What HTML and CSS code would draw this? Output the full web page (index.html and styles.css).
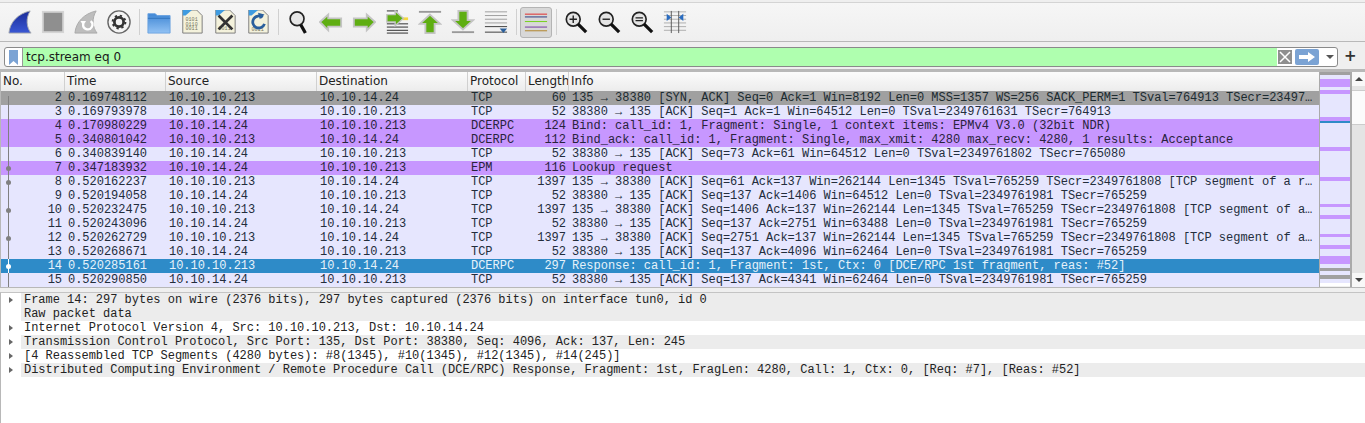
FILE: index.html
```html
<!DOCTYPE html>
<html lang="en">
<head>
    <meta charset="UTF-8">
    <title>Wireshark</title>
    <link rel="stylesheet" href="styles.css">
</head>
<body>
<header class="toolbar">
    <svg class="tool" viewBox="0 0 26 26"><defs><linearGradient id="fin" x1="0" y1="0" x2="0" y2="1"><stop offset="0" stop-color="#1a2c98"/><stop offset="1" stop-color="#3a58d4"/></linearGradient></defs><path d="M1 25C2 13 11 4 24 1C19 9 20 19 25 25Z" fill="url(#fin)" stroke="#a4a8ae"/></svg>
    <svg class="tool" viewBox="0 0 26 26"><rect x="2" y="2" width="22" height="22" fill="#8f8f8f" stroke="#d4d4d4" stroke-width="2"/></svg>
    <svg class="tool" viewBox="0 0 26 26"><path d="M1 25C2 13 11 4 24 1C19 9 20 19 25 25Z" fill="#bdbdbd" stroke="#a8a8a8"/><path d="M10 15A5 5 0 1 0 18 12" fill="none" stroke="#fff" stroke-width="2.5"/><path d="M7 12L13 12L10 17Z" fill="#fff"/></svg>
    <svg class="tool" viewBox="0 0 26 26"><circle cx="13" cy="13" r="12" fill="#f4f4f4" stroke="#666" stroke-width="1.500"/><circle cx="13" cy="13" r="5" fill="none" stroke="#333" stroke-width="3"/><circle cx="13" cy="13" r="7" fill="none" stroke="#333" stroke-width="2" stroke-dasharray="2.500 3"/></svg>
    <span class="sep"></span>
    <svg class="tool" viewBox="0 0 26 26"><defs><linearGradient id="folder" x1="0" y1="0" x2="0" y2="1"><stop offset="0" stop-color="#3f86d4"/><stop offset="1" stop-color="#92c2f4"/></linearGradient></defs><path d="M1 4H9L11 6H25V25H1Z" fill="url(#folder)" stroke="#6aa2e0"/><path d="M1 9H25" stroke="#2f72bc"/></svg>
    <svg class="tool" viewBox="0 0 26 26"><path d="M3 0H18L24 6V25H3Z" fill="#f4f2dc" stroke="#777"/><path d="M3 0H13L6 6H3Z" fill="#3f9be0"/><text class="bits" x="6" y="12">0101</text><text class="bits" x="6" y="17">0110</text><text class="bits" x="6" y="22">0011</text></svg>
    <svg class="tool" viewBox="0 0 26 26"><path d="M3 0H18L24 6V25H3Z" fill="#f4f2dc" stroke="#777"/><path d="M3 0H13L6 6H3Z" fill="#3f9be0"/><text class="bits" x="6" y="22">0011</text><path d="M6 6L21 21M21 6L6 21" stroke="#333" stroke-width="3"/></svg>
    <svg class="tool" viewBox="0 0 26 26"><path d="M3 0H18L24 6V25H3Z" fill="#f4f2dc" stroke="#777"/><path d="M3 0H13L6 6H3Z" fill="#3f9be0"/><text class="bits" x="6" y="23">0011</text><path d="M18 8A6.500 6.500 0 1 0 20 15" fill="none" stroke="#2a5f9c" stroke-width="3"/><path d="M13 3L20 5L15 10Z" fill="#2a5f9c"/></svg>
    <span class="sep"></span>
    <svg class="tool" viewBox="0 0 26 26"><circle cx="12" cy="9.500" r="7.500" fill="#e6e6e6" stroke="#222" stroke-width="1.800"/><path d="M16 16L21 25" stroke="#111" stroke-width="3.500"/></svg>
    <svg class="tool" viewBox="0 0 26 26"><path d="M1 13L10 5V9H24V18H10V22Z" fill="#5fae12" stroke="#c4c4c4" stroke-width="2"/></svg>
    <svg class="tool" viewBox="0 0 26 26"><path d="M25 13L16 5V9H2V18H16V22Z" fill="#5fae12" stroke="#c4c4c4" stroke-width="2"/></svg>
    <svg class="tool" viewBox="0 0 26 26"><path d="M2 1H14M2 15H25M2 18.500H25M2 22H25M2 25H25" stroke="#222"/><rect x="19" y="8" width="6" height="3" fill="#f5d840"/><path d="M20 9L11 1V5H2V13H11V17Z" fill="#5fae12" stroke="#c4c4c4" stroke-width="1.500"/></svg>
    <svg class="tool" viewBox="0 0 26 26"><path d="M1 2H25" stroke="#999" stroke-width="2"/><path d="M13 5L24 15H18V25H8V15H2Z" fill="#5fae12" stroke="#c4c4c4" stroke-width="2"/></svg>
    <svg class="tool" viewBox="0 0 26 26"><path d="M1 24H25" stroke="#999" stroke-width="2"/><path d="M13 21L24 11H18V1H8V11H2Z" fill="#5fae12" stroke="#c4c4c4" stroke-width="2"/></svg>
    <svg class="tool" viewBox="0 0 26 26"><path d="M1 2H25M1 6H25M1 10H25M1 14H25" stroke="#999"/><path d="M1 18H25M1 24H25" stroke="#333"/><path d="M17 20H25L21 25Z" fill="#2a5f9c"/></svg>
    <span class="sep"></span>
    <span class="tool-on">
        <svg class="tool" viewBox="0 0 26 26"><path d="M1 4.500H25" stroke="#e02020"/><path d="M1 7.500H25" stroke="#20307a"/><path d="M1 12.500H25" stroke="#70d010"/><path d="M1 18.500H25" stroke="#7030a0"/><path d="M1 22.500H25" stroke="#b08020"/></svg>
    </span>
    <span class="sep"></span>
    <svg class="tool" viewBox="0 0 26 26"><circle cx="10" cy="10" r="7.500" fill="#e4e4e4" stroke="#222" stroke-width="1.800"/><path d="M6 10H14M10 6V14" stroke="#222" stroke-width="1.500"/><path d="M15 15L24 24" stroke="#111" stroke-width="3.500"/></svg>
    <svg class="tool" viewBox="0 0 26 26"><circle cx="10" cy="10" r="7.500" fill="#e4e4e4" stroke="#222" stroke-width="1.800"/><path d="M6 10H14" stroke="#222" stroke-width="1.500"/><path d="M15 15L24 24" stroke="#111" stroke-width="3.500"/></svg>
    <svg class="tool" viewBox="0 0 26 26"><circle cx="10" cy="10" r="7.500" fill="#e4e4e4" stroke="#222" stroke-width="1.800"/><path d="M6 8.500H14M6 11.500H14" stroke="#222" stroke-width="1.500"/><path d="M15 15L24 24" stroke="#111" stroke-width="3.500"/></svg>
    <svg class="tool" viewBox="0 0 26 26"><path d="M1 2H25M1 6H25M1 10H25M1 14H25M1 18H25M1 22H25" stroke="#aaa"/><path d="M9 1V25M17 1V25" stroke="#555"/><path d="M9 8L4 4V12ZM17 8L22 4V12Z" fill="#2a6cc0"/></svg>
</header>

<form class="filter-bar">
    <div class="filter">
        <span class="bookmark">
            <svg width="9" height="15" viewBox="0 0 9 15"><path d="M0 0H9V15L4.500 11L0 15Z" fill="#7ba3d4"/></svg>
        </span>
        <input class="filter-input" type="text" value="tcp.stream eq 0">
        <span class="clear">
            <svg width="14" height="14" viewBox="0 0 14 14"><rect width="14" height="14" fill="#8f8f8f"/><path d="M2 2L12 12M12 2L2 12" stroke="#fff" stroke-width="1.500"/></svg>
        </span>
        <span class="apply">
            <svg width="16" height="10" viewBox="0 0 16 10"><path d="M0 3H9V0L16 5L9 10V7H0Z" fill="#fff"/></svg>
        </span>
        <span class="caret"></span>
    </div>
    <span class="plus">+</span>
</form>

<section class="packets">
    <table class="packet-list">
        <colgroup>
            <col class="c-no"><col class="c-time"><col class="c-addr"><col class="c-addr"><col class="c-proto"><col class="c-len"><col>
        </colgroup>
        <thead>
            <tr><th>No.</th><th>Time</th><th>Source</th><th>Destination</th><th>Protocol</th><th>Length</th><th>Info</th></tr>
        </thead>
        <tbody>
            <tr class="syn"><td class="num first">2</td><td>0.169748112</td><td>10.10.10.213</td><td>10.10.14.24</td><td>TCP</td><td class="len">60</td><td>135 → 38380 [SYN, ACK] Seq=0 Ack=1 Win=8192 Len=0 MSS=1357 WS=256 SACK_PERM=1 TSval=764913 TSecr=23497…</td></tr>
            <tr class="tcp"><td class="num">3</td><td>0.169793978</td><td>10.10.14.24</td><td>10.10.10.213</td><td>TCP</td><td class="len">52</td><td>38380 → 135 [ACK] Seq=1 Ack=1 Win=64512 Len=0 TSval=2349761631 TSecr=764913</td></tr>
            <tr class="rpc"><td class="num">4</td><td>0.170980229</td><td>10.10.14.24</td><td>10.10.10.213</td><td>DCERPC</td><td class="len">124</td><td>Bind: call_id: 1, Fragment: Single, 1 context items: EPMv4 V3.0 (32bit NDR)</td></tr>
            <tr class="rpc"><td class="num">5</td><td>0.340801042</td><td>10.10.10.213</td><td>10.10.14.24</td><td>DCERPC</td><td class="len">112</td><td>Bind_ack: call_id: 1, Fragment: Single, max_xmit: 4280 max_recv: 4280, 1 results: Acceptance</td></tr>
            <tr class="tcp"><td class="num">6</td><td>0.340839140</td><td>10.10.14.24</td><td>10.10.10.213</td><td>TCP</td><td class="len">52</td><td>38380 → 135 [ACK] Seq=73 Ack=61 Win=64512 Len=0 TSval=2349761802 TSecr=765080</td></tr>
            <tr class="rpc"><td class="num dot">7</td><td>0.347183932</td><td>10.10.14.24</td><td>10.10.10.213</td><td>EPM</td><td class="len">116</td><td>Lookup request</td></tr>
            <tr class="tcp"><td class="num dot">8</td><td>0.520162237</td><td>10.10.10.213</td><td>10.10.14.24</td><td>TCP</td><td class="len">1397</td><td>135 → 38380 [ACK] Seq=61 Ack=137 Win=262144 Len=1345 TSval=765259 TSecr=2349761808 [TCP segment of a r…</td></tr>
            <tr class="tcp"><td class="num">9</td><td>0.520194058</td><td>10.10.14.24</td><td>10.10.10.213</td><td>TCP</td><td class="len">52</td><td>38380 → 135 [ACK] Seq=137 Ack=1406 Win=64512 Len=0 TSval=2349761981 TSecr=765259</td></tr>
            <tr class="tcp"><td class="num dot">10</td><td>0.520232475</td><td>10.10.10.213</td><td>10.10.14.24</td><td>TCP</td><td class="len">1397</td><td>135 → 38380 [ACK] Seq=1406 Ack=137 Win=262144 Len=1345 TSval=765259 TSecr=2349761808 [TCP segment of a…</td></tr>
            <tr class="tcp"><td class="num">11</td><td>0.520243096</td><td>10.10.14.24</td><td>10.10.10.213</td><td>TCP</td><td class="len">52</td><td>38380 → 135 [ACK] Seq=137 Ack=2751 Win=63488 Len=0 TSval=2349761981 TSecr=765259</td></tr>
            <tr class="tcp"><td class="num dot">12</td><td>0.520262729</td><td>10.10.10.213</td><td>10.10.14.24</td><td>TCP</td><td class="len">1397</td><td>135 → 38380 [ACK] Seq=2751 Ack=137 Win=262144 Len=1345 TSval=765259 TSecr=2349761808 [TCP segment of a…</td></tr>
            <tr class="tcp"><td class="num">13</td><td>0.520268671</td><td>10.10.14.24</td><td>10.10.10.213</td><td>TCP</td><td class="len">52</td><td>38380 → 135 [ACK] Seq=137 Ack=4096 Win=62464 Len=0 TSval=2349761981 TSecr=765259</td></tr>
            <tr class="sel"><td class="num dot">14</td><td>0.520285161</td><td>10.10.10.213</td><td>10.10.14.24</td><td>DCERPC</td><td class="len">297</td><td>Response: call_id: 1, Fragment: 1st, Ctx: 0 [DCE/RPC 1st fragment, reas: #52]</td></tr>
            <tr class="tcp"><td class="num">15</td><td>0.520290850</td><td>10.10.14.24</td><td>10.10.10.213</td><td>TCP</td><td class="len">52</td><td>38380 → 135 [ACK] Seq=137 Ack=4341 Win=62464 Len=0 TSval=2349761981 TSecr=765259</td></tr>
        </tbody>
    </table>

    <svg class="minimap" width="30" height="215" viewBox="0 72 30 215">
        <rect y="72" width="30" height="214" fill="#e6e6fe"/>
        <rect y="72" width="30" height="3" fill="#a0a0a0"/>
        <g fill="#c797ff">
            <rect y="79" width="30" height="8"/><rect y="90" width="30" height="4"/>
            <rect y="117" width="30" height="4"/><rect y="147" width="30" height="4"/>
            <rect y="177" width="30" height="4"/><rect y="204" width="30" height="3"/>
            <rect y="215" width="30" height="4"/><rect y="234" width="30" height="3"/>
            <rect y="245" width="30" height="4"/><rect y="256" width="30" height="8"/>
        </g>
        <rect y="121" width="30" height="2" fill="#2e8bc8"/>
        <rect y="268" width="30" height="3" fill="#a0a0a0"/>
        <rect y="275" width="30" height="4" fill="#a0a0a0"/>
        <rect y="283" width="30" height="3" fill="#fff"/>
    </svg>

    <div class="scrollbar">
        <span class="step up"></span>
        <span class="thumb"></span>
        <span class="trough"></span>
        <span class="step down"></span>
    </div>
</section>

<section class="details">
    <div class="row alt"><span class="arrow"></span>Frame 14: 297 bytes on wire (2376 bits), 297 bytes captured (2376 bits) on interface tun0, id 0</div>
    <div class="row alt">Raw packet data</div>
    <div class="row"><span class="arrow"></span>Internet Protocol Version 4, Src: 10.10.10.213, Dst: 10.10.14.24</div>
    <div class="row alt"><span class="arrow"></span>Transmission Control Protocol, Src Port: 135, Dst Port: 38380, Seq: 4096, Ack: 137, Len: 245</div>
    <div class="row"><span class="arrow"></span>[4 Reassembled TCP Segments (4280 bytes): #8(1345), #10(1345), #12(1345), #14(245)]</div>
    <div class="row alt"><span class="arrow"></span>Distributed Computing Environment / Remote Procedure Call (DCE/RPC) Response, Fragment: 1st, FragLen: 4280, Call: 1, Ctx: 0, [Req: #7], [Reas: #52]</div>
</section>
</body>
</html>
```

FILE: styles.css
```css
html, body {
    height: 100%;
}
body {
    margin: 0;
    overflow: hidden;
    background: #efefef;
    font-family: "Liberation Mono", monospace;
    font-size: 12px;
    color: #2e3436;
}
.toolbar {
    height: 38px;
    margin-top: 2px;
    border-top: 1px solid #d4d4d4;
    border-bottom: 1px solid #b8b8b8;
    background: linear-gradient(#f6f6f6, #efefef);
    display: flex;
    align-items: center;
    padding-left: 3.5px;
}
.tool {
    width: 24px;
    height: 24px;
    flex: none;
    margin: 0 4.5px;
}
.bits {
    font-family: "Liberation Mono", monospace;
    font-size: 5.5px;
    fill: #77775c;
}
.sep {
    width: 1px;
    height: 26px;
    flex: none;
    background: #d0d0d0;
    margin: 0 2.5px 0 3.5px;
}
.tool-on {
    display: flex;
    flex: none;
    box-sizing: border-box;
    width: 32px;
    height: 31px;
    margin: 0 0.5px;
    align-items: center;
    background: #d8d8d8;
    border: 1px solid #b4b4b4;
    border-radius: 3px;
}
.tool-on .tool {
    margin: 0 3px;
}
.filter-bar {
    height: 22px;
    margin: 0;
    display: flex;
    align-items: flex-start;
    padding: 5px 0 0 4px;
    border-bottom: 3px solid #b8b8b8;
}
.filter {
    width: 1334px;
    height: 20px;
    box-sizing: border-box;
    display: flex;
    align-items: stretch;
    border: 1px solid #8a8a8a;
    border-radius: 3px;
    background: #fff;
    overflow: hidden;
}
.bookmark {
    width: 17px;
    flex: none;
    display: flex;
    align-items: center;
    justify-content: center;
    border-right: 1px solid #999;
}
.filter-input {
    flex: 1;
    min-width: 0;
    border: 0;
    padding: 0 3px;
    background: #afffaf;
    font-family: "DejaVu Sans", sans-serif;
    font-size: 12px;
    color: #1a1a1a;
}
.clear {
    width: 14px;
    flex: none;
    margin-left: 1px;
    display: flex;
    align-items: center;
    justify-content: center;
}
.apply {
    width: 24px;
    flex: none;
    margin: 1px 0 1px 3px;
    border-radius: 2px;
    background: #7ba3d4;
    display: flex;
    align-items: center;
    justify-content: center;
}
.caret {
    width: 0;
    height: 0;
    flex: none;
    margin: 7px 3px 0 7px;
    border: 4px solid transparent;
    border-top: 4px solid #555;
    border-bottom: 0;
}
.plus {
    margin-left: 6px;
    line-height: 18px;
    font-family: "DejaVu Sans", sans-serif;
    font-size: 15px;
    font-weight: bold;
    color: #333;
}
.packets {
    height: 215px;
    display: flex;
    border-bottom: 1px solid #b8b8b8;
    border-left: 1px solid #b8b8b8;
}
.packet-list {
    width: 1318px;
    table-layout: fixed;
    border-collapse: separate;
    border-spacing: 0;
    flex: none;
    align-self: flex-start;
}
.c-no { width: 64px; }
.c-time { width: 101px; }
.c-addr { width: 151px; }
.c-proto { width: 58px; }
.c-len { width: 43px; }
th {
    height: 18px;
    padding: 0 0 1px 2px;
    text-align: left;
    font-family: "DejaVu Sans", sans-serif;
    font-size: 12px;
    font-weight: normal;
    color: #222;
    background: linear-gradient(#fbfbfb, #ececec);
    border-right: 1px solid #d0d0d0;
    white-space: nowrap;
    overflow: hidden;
}
th:last-child {
    border-right: 0;
}
td {
    height: 14px;
    padding: 0 0 0 3px;
    line-height: 14px;
    letter-spacing: -0.014px;
    white-space: nowrap;
    overflow: hidden;
}
.syn td { background: #a0a0a0; color: #1c2b30; }
.tcp td { background: #e6e6fe; color: #232d3c; }
.rpc td { background: #c797ff; color: #28233c; }
.sel td { background: #2e8bc8; color: #e6f2fa; }
td.num, td.len {
    text-align: right;
    padding: 0 3px 0 0;
}
.num {
    position: relative;
}
/* conversation line over the number column */
.num::before {
    content: "";
    position: absolute;
    left: 7px;
    top: 0;
    bottom: 0;
    width: 1px;
    background: #808080;
}
.num.first::before {
    top: 5px;
}
.dot::after {
    content: "";
    position: absolute;
    left: 5px;
    top: 5px;
    width: 5px;
    height: 5px;
    border-radius: 50%;
    background: #808080;
}
.sel .num::before, .sel .dot::after {
    background: #fff;
}
.minimap {
    flex: none;
    border-left: 1px solid #aaa;
    border-right: 2px solid #aaa;
}
.scrollbar {
    flex: 1;
    display: flex;
    flex-direction: column;
    background: #e4e4e4;
}
.step {
    height: 14px;
    flex: none;
    background: #f8f8f8;
    display: flex;
    align-items: center;
    justify-content: center;
}
.step::before {
    content: "";
    border: 4px solid transparent;
}
.up::before {
    border-bottom: 4px solid #444;
    border-top: 0;
}
.down::before {
    border-top: 4px solid #444;
    border-bottom: 0;
}
.thumb {
    height: 35px;
    margin-top: 4px;
    flex: none;
    background: #fbfbfb;
    border-top: 1px solid #ccc;
    border-bottom: 1px solid #ccc;
    box-sizing: border-box;
}
.trough {
    flex: 1;
}
.details {
    margin-top: 4px;
    height: 130px;
    background: #fff;
    border-top: 1px solid #c4c4c4;
    border-left: 1px solid #b8b8b8;
    white-space: nowrap;
    overflow: hidden;
}
.row {
    height: 14px;
    line-height: 14px;
    margin-left: 20px;
    padding-left: 3px;
    letter-spacing: -0.014px;
    position: relative;
    color: #222;
}
.alt {
    background: #ececec;
}
.arrow {
    position: absolute;
    left: -12px;
    top: 4px;
    border: 3px solid transparent;
    border-left: 4px solid #666;
    border-right: 0;
}
```
